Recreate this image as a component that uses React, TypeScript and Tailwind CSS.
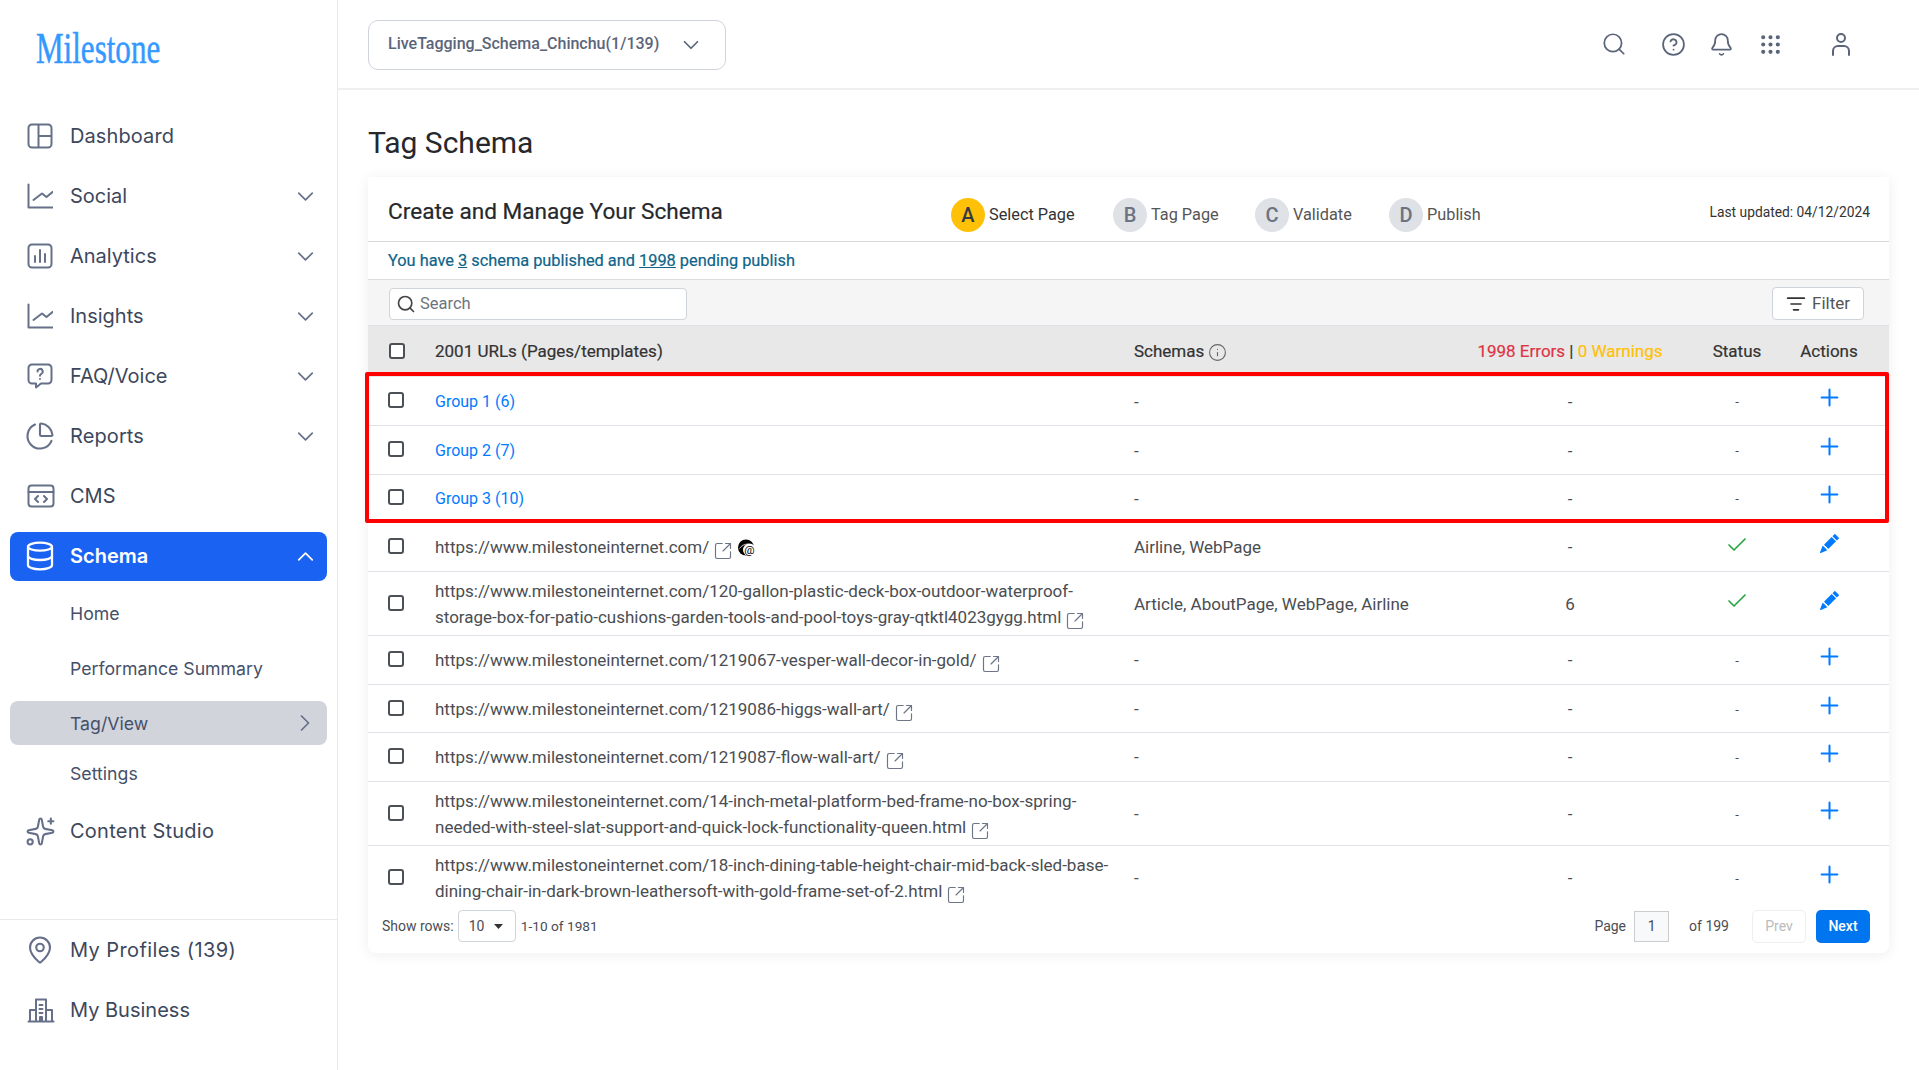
import React from "react";
import { ChartPie, Database, Sparkles, MapPin, ChevronDown, ChevronUp, ChevronRight, Search, Bell, Info, Plus, Check, SquareArrowOutUpRight, CircleHelp, Grip, ListFilter } from "lucide-react";
import { BsPencilFill } from "react-icons/bs";

const s = { fill: "none", stroke: "currentColor", strokeWidth: 2, strokeLinecap: "round" as const, strokeLinejoin: "round" as const };
const IconDash = () => (
  <svg width="26" height="26" viewBox="0 0 26 26" {...s}><rect x="1.500" y="1.500" width="23" height="23" rx="3.500" /><path d="M11.500 2v22M11.500 13H24" /></svg>
);
const IconBars = () => (
  <svg width="26" height="26" viewBox="0 0 26 26" {...s}><rect x="1.500" y="1.500" width="23" height="23" rx="3.500" /><path d="M8 19v-6M13 19V7M18 19v-8" /></svg>
);
const IconChart = () => (
  <svg width="26" height="26" viewBox="0 0 26 26" {...s}><path d="M1.500 1.500v23h24M6.500 17l8.500-6.500 4.500 3.500 6-5" /></svg>
);
const IconFaq = () => (
  <svg width="26" height="26" viewBox="0 0 26 26" {...s}><path d="M5 1.500h16a3.500 3.500 0 0 1 3.500 3.500v12a3.500 3.500 0 0 1-3.500 3.500h-7l-5 4v-4H5A3.500 3.500 0 0 1 1.500 17V5A3.500 3.500 0 0 1 5 1.500z" /><path d="M10.500 8.500a2.600 2.600 0 1 1 3.800 2.300c-.9.500-1.300 1-1.300 1.900M13 16v.1" /></svg>
);
const IconCms = () => (
  <svg width="28" height="26" viewBox="0 0 28 26" {...s}><rect x="1.500" y="2.500" width="25" height="21" rx="3" /><path d="M1.500 9h25M11 13l-3 3 3 3M17 13l3 3-3 3" /></svg>
);
const IconBiz = () => (
  <svg width="28" height="26" viewBox="0 0 28 26" {...s}><path d="M1.500 24.500h25M3 24V13h6M25 24V13h-6M9 24V2.500h10V24M12.500 8h3M12.500 12h3M12.500 16h3M13 24v-4h2v4" /></svg>
);
const IconUser = () => (
  <svg width="24" height="26" viewBox="0 0 24 26" {...s}><circle cx="12" cy="7" r="4" /><path d="M4 24v-4a5 5 0 0 1 5-5h6a5 5 0 0 1 5 5v4" /></svg>
);
const IconAt = () => (
  <svg width="20" height="18" viewBox="0 0 20 18">
    <circle cx="9" cy="8.500" r="8" fill="#000" />
    <path d="M2.500 9.500c2-3 5-4.500 9-4.500" stroke="#fff" strokeWidth="0.8" fill="none" />
    <circle cx="12.500" cy="11" r="6.500" fill="#fff" />
    <text x="12.500" y="14.500" textAnchor="middle" fontSize="11.500" fontFamily="Roboto, sans-serif" fill="#000">@</text>
  </svg>
);

function NavItem({ icon, label, chevron, cls }: { icon: React.ReactNode; label: string; chevron?: boolean; cls?: string }) {
  return (
    <div className="flex h-[49px] items-center pl-[27px] pr-[22px] text-[20px] text-[#3d475c]">
      <span className="flex w-[43px] shrink-0 text-[#667089]">{icon}</span>
      <span className={cls}>{label}</span>
      {chevron && <ChevronDown size={27} strokeWidth={1.500} className="ml-auto -mr-[4px] text-[#667089]" />}
    </div>
  );
}

function Ext() {
  return <SquareArrowOutUpRight size={20} strokeWidth={1.400} className="ml-[4px] inline-block -mb-[5px] text-[#6c7686]" />;
}

type RowT = { h: string; url: React.ReactNode; group?: boolean; schema?: string; err?: string; done?: boolean };

const rows: RowT[] = [
  { h: "h-[49px]", group: true, url: "Group 1 (6)" },
  { h: "h-[48.500px]", group: true, url: "Group 2 (7)" },
  { h: "h-[48.500px]", group: true, url: "Group 3 (10)" },
  { h: "h-[49px]", schema: "Airline, WebPage", done: true, url: <>https://www.milestoneinternet.com/<Ext /><span className="ml-[4px] inline-block -mb-[4px]"><IconAt /></span></> },
  { h: "h-[64px]", schema: "Article, AboutPage, WebPage, Airline", err: "6", done: true, url: <>https://www.milestoneinternet.com/120-gallon-plastic-deck-box-outdoor-waterproof-storage-box-for-patio-cushions-garden-tools-and-pool-toys-gray-qtktl4023gygg.html<Ext /></> },
  { h: "h-[49px]", url: <>https://www.milestoneinternet.com/1219067-vesper-wall-decor-in-gold/<Ext /></> },
  { h: "h-[48px]", url: <>https://www.milestoneinternet.com/1219086-higgs-wall-art/<Ext /></> },
  { h: "h-[49px]", url: <>https://www.milestoneinternet.com/1219087-flow-wall-art/<Ext /></> },
  { h: "h-[64px]", url: <>https://www.milestoneinternet.com/14-inch-metal-platform-bed-frame-no-box-spring-needed-with-steel-slat-support-and-quick-lock-functionality-queen.html<Ext /></> },
  { h: "h-[64px]", url: <>https://www.milestoneinternet.com/18-inch-dining-table-height-chair-mid-back-sled-base-dining-chair-in-dark-brown-leathersoft-with-gold-frame-set-of-2.html<Ext /></> },
];

const cols = "grid grid-cols-[67px_699px_324px_224px_110px_74px] items-center";

function Box({ head }: { head?: boolean }) {
  return <span className={`${head ? "ml-[21px]" : "ml-[20px]"} -mt-[2px] block h-[16px] w-[16px] rounded-[3px] border-2 border-[#4b4f56] bg-white`} />;
}

function Step({ l, t, w, active }: { l: string; t: string; w: string; active?: boolean }) {
  return (
    <div className={`mt-[12px] flex items-center ${w}`}>
      <span className={`flex h-[34px] w-[34px] items-center justify-center rounded-full text-[20px] font-medium ${active ? "bg-[#ffc107] text-[#333a45]" : "bg-[#dee1e6] text-[#6b7280]"}`}>{l}</span>
      <span className={`ml-[4px] text-[16.300px] ${active ? "text-[#333]" : "text-[#555]"}`}>{t}</span>
    </div>
  );
}

export default function App() {
  return (
    <div className="flex h-[1070px] w-[1919px] overflow-hidden bg-white font-['Roboto',sans-serif]">
      <aside className="flex h-full w-[338px] shrink-0 flex-col border-r border-[#e8e9ec] font-['Inter',sans-serif]">
        <div className="h-[111.500px] shrink-0 pl-[36px] pt-[20px]">
          <span className="inline-block origin-left scale-x-[0.69] font-['Liberation_Serif',serif] text-[45px] leading-[56px] text-[#3399ff] [-webkit-text-stroke:0.5px_#3399ff]">Milestone</span>
        </div>
        <nav className="flex flex-col gap-[11px]">
          <NavItem icon={<IconDash />} label="Dashboard" cls="tracking-[0.1px]" />
          <NavItem icon={<IconChart />} label="Social" chevron />
          <NavItem icon={<IconBars />} label="Analytics" chevron />
          <NavItem icon={<IconChart />} label="Insights" chevron />
          <NavItem icon={<IconFaq />} label="FAQ/Voice" chevron />
          <NavItem icon={<ChartPie size={30} strokeWidth={1.700} className="-ml-[2px] shrink-0" />} label="Reports" chevron cls="tracking-[0.1px]" />
          <NavItem icon={<IconCms />} label="CMS" />
          <div className="mx-[10px] flex h-[49px] items-center rounded-lg bg-[#1a62f2] pl-[17px] pr-[12px] text-[20px] font-semibold text-white">
            <span className="flex w-[43px] shrink-0"><Database size={32} strokeWidth={1.700} className="-ml-[3px] shrink-0" /></span>
            <span>Schema</span>
            <ChevronUp size={27} strokeWidth={1.500} className="ml-auto -mr-[4px]" />
          </div>
        </nav>
        <div className="mt-[10.500px] flex flex-col text-[17.700px] text-[#46506a]">
          <div className="flex h-[44px] items-center pl-[70px] pt-[2px]">Home</div>
          <div className="mt-[11px] flex h-[44px] items-center pl-[70px] pt-[2px]">Performance Summary</div>
          <div className="mx-[10px] mt-[11px] flex h-[44px] items-center rounded-lg bg-[#d1d5db] pl-[60px] pr-[13px]">
            <span className="pt-[2px]">Tag/View</span>
            <ChevronRight size={28} strokeWidth={1.500} className="ml-auto -mr-[5px] text-[#667089]" />
          </div>
          <div className="mt-[6px] flex h-[44px] items-center pl-[70px] pt-[2px]">Settings</div>
        </div>
        <div className="mt-[11.500px]">
          <NavItem icon={<Sparkles size={31} strokeWidth={1.600} className="-ml-[2px] shrink-0" />} label="Content Studio" cls="tracking-[0.25px]" />
        </div>
        <div className="mt-auto flex h-[151px] shrink-0 flex-col gap-[11px] border-t border-[#e8e9ec] pt-[5px]">
          <NavItem icon={<MapPin size={30} strokeWidth={1.700} className="-ml-[2px] shrink-0" />} label="My Profiles (139)" cls="tracking-[0.4px]" />
          <NavItem icon={<IconBiz />} label="My Business" />
        </div>
      </aside>

      <main className="flex min-w-0 flex-1 flex-col">
        <header className="flex h-[90px] shrink-0 items-center border-b-2 border-[#eeeff1] pl-[30px] text-[#5b6579]">
          <div className="mt-[1px] flex h-[50px] w-[358px] items-center justify-between rounded-[10px] border border-[#cfd3dc] pl-[19px] pr-[21px]">
            <span className="-mt-[2px] text-[16px] font-medium">LiveTagging_Schema_Chinchu(1/139)</span>
            <ChevronDown size={26} strokeWidth={1.600} />
          </div>
          <div className="ml-auto flex items-center pr-[66px]">
            <Search size={26} strokeWidth={1.600} />
            <CircleHelp size={25} strokeWidth={1.700} className="ml-[34px]" />
            <Bell size={25} strokeWidth={1.700} className="ml-[23px]" />
            <Grip size={25} strokeWidth={2} className="ml-[24px]" />
            <span className="ml-[46px]"><IconUser /></span>
          </div>
        </header>

        <div className="pl-[30px] pr-[30px]">
          <h1 className="flex h-[87px] items-center pt-[19px] text-[30px] font-normal leading-none text-[#25282c]">Tag Schema</h1>

          <section className="rounded-b-lg bg-white shadow-[0_2px_14px_rgba(30,30,60,0.07)]">
            <div className="flex h-[65px] items-center border-b border-[#d9d9d9] pl-[20px] pr-[19px]">
              <div className="mt-[5px] w-[563px] text-[22.600px] font-normal text-[#25282c] [-webkit-text-stroke:0.2px_#25282c]">Create and Manage Your Schema</div>
              <Step l="A" t="Select Page" w="w-[162px]" active />
              <Step l="B" t="Tag Page" w="w-[142px]" />
              <Step l="C" t="Validate" w="w-[134px]" />
              <Step l="D" t="Publish" w="w-[100px]" />
              <div className="ml-auto mt-[6px] text-[13.800px] text-[#333]">Last updated: 04/12/2024</div>
            </div>
            <div className="flex h-[38px] items-center border-b border-[#dcdce0] pl-[20px] pt-[2px] text-[16.350px] font-normal text-[#0e6488] [-webkit-text-stroke:0.2px_#0e6488]">
              <span>You have <u>3</u> schema published and <u>1998</u> pending publish</span>
            </div>
            <div className="flex h-[46px] items-center justify-between border-b border-[#dfdfe6] bg-[#f5f5f5] pl-[21px] pr-[25px]">
              <div className="mt-[2px] flex h-[32px] w-[298px] items-center rounded-[4px] border border-[#ced4da] bg-white pl-[6px] text-[16.500px] text-[#6c757d]">
                <Search size={20} strokeWidth={2} className="mr-[4px] text-[#444]" /><span className="pt-[2px]">Search</span>
              </div>
              <div className="mt-[2px] flex h-[33px] w-[92px] items-center justify-center rounded-[4px] border border-[#ced4da] bg-white text-[17px] text-[#555]">
                <ListFilter size={20} strokeWidth={2} className="mr-[6px] text-[#333]" />Filter
              </div>
            </div>
            <div className={`${cols} h-[51px] bg-[#e8e8e8] text-[17px] font-normal text-[#333] [-webkit-text-stroke:0.2px_#333]`}>
              <Box head />
              <div className="pt-[1px]">2001 URLs (Pages/templates)</div>
              <div className="flex items-center pt-[1px]">Schemas<Info size={19} strokeWidth={1.400} className="ml-[4px] text-[#666]" /></div>
              <div className="whitespace-nowrap pt-[1px] text-center"><span className="text-[#dc3545] [-webkit-text-stroke:0.2px_#dc3545]">1998 Errors</span> | <span className="text-[#ffc107] [-webkit-text-stroke:0.2px_#ffc107]">0 Warnings</span></div>
              <div className="pt-[1px] text-center">Status</div>
              <div className="pt-[1px] text-center">Actions</div>
            </div>
            <div className="relative">
              {rows.map((r, i) => (
                <div key={i} className={`${cols} ${r.h} ${i < rows.length - 1 ? "border-b border-[#e1e1e8]" : ""} text-[17px] leading-[26px] text-[#4a4d52]`}>
                  <Box />
                  <div className={`pr-[10px] ${r.group ? "pt-[2px] text-[16px] text-[#007bff]" : ""}`}>{r.url}</div>
                  <div className={r.group ? "pt-[2px]" : ""}>{r.schema ?? "-"}</div>
                  <div className={`text-center ${r.group ? "pt-[2px]" : ""}`}>{r.err ?? "-"}</div>
                  <div className="flex justify-center">
                    {r.done ? <Check size={24} strokeWidth={1.700} className="mb-[5px] text-[#28a745]" /> : <span className="pt-[2px] text-[13px]">-</span>}
                  </div>
                  <div className="flex justify-center">
                    {r.done ? <BsPencilFill size={19} className="mb-[7px] text-[#007bff]" /> : <Plus size={27} strokeWidth={1.800} className="mb-[7px] text-[#007bff]" />}
                  </div>
                </div>
              ))}
              <div className="pointer-events-none absolute -left-[3px] -top-[5px] right-0 h-[151px] rounded-[2px] border-4 border-[#ff0000]" />
            </div>
            <div className="flex h-[43px] items-start justify-between pl-[14px] pr-[19px] text-[14px] text-[#4a4d52]">
              <div className="flex items-center">
                <span>Show rows:</span>
                <span className="ml-[4px] flex h-[32px] w-[58px] items-center rounded-[4px] border border-[#ced4da] pl-[10px]">
                  10
                  <svg width="9" height="5" viewBox="0 0 9 5" className="ml-[10px]"><path d="M0 0h9L4.500 5z" fill="#333" /></svg>
                </span>
                <span className="ml-[5px] text-[13.700px]">1-10 of 1981</span>
              </div>
              <div className="flex items-center">
                <span>Page</span>
                <span className="ml-[8px] flex h-[31px] w-[35px] items-center justify-center border border-[#ccc] bg-[#f8f9fa]">1</span>
                <span className="ml-[20px]">of 199</span>
                <span className="ml-[23px] flex h-[33px] w-[54px] items-center justify-center rounded-[5px] border border-[#eee] text-[#bbb]">Prev</span>
                <span className="ml-[10px] flex h-[33px] w-[54px] items-center justify-center rounded-[5px] bg-[#0075f0] font-medium text-white">Next</span>
              </div>
            </div>
          </section>
        </div>
      </main>
    </div>
  );
}
